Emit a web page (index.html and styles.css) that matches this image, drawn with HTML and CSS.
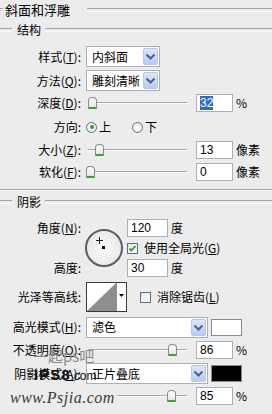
FILE: index.html
```html
<!DOCTYPE html>
<html lang="zh-CN">
<head>
    <meta charset="UTF-8">
    <title>斜面和浮雕</title>
    <link rel="stylesheet" href="styles.css">
</head>
<body>
    <div class="panel">
        <div class="legend legend-top"><span>斜面和浮雕</span></div>
        <div class="legend legend-sub"><span>结构</span></div>

        <!-- 结构 -->
        <div class="row row-combo gap-6">
            <span class="lbl">样式(<u>T</u>):</span>
            <div class="combo combo-sm">
                <span class="combo-text">内斜面</span>
                <span class="combo-btn"><svg width="11" height="7" viewBox="0 0 11 7"><path d="M1.5 1.5 L5.5 5.5 L9.5 1.5" fill="none" stroke="#4d6185" stroke-width="2"/></svg></span>
            </div>
        </div>
        <div class="row row-combo gap-3">
            <span class="lbl">方法(<u>Q</u>):</span>
            <div class="combo combo-sm">
                <span class="combo-text">雕刻清晰</span>
                <span class="combo-btn"><svg width="11" height="7" viewBox="0 0 11 7"><path d="M1.5 1.5 L5.5 5.5 L9.5 1.5" fill="none" stroke="#4d6185" stroke-width="2"/></svg></span>
            </div>
        </div>
        <div class="row gap-2">
            <span class="lbl">深度(<u>D</u>):</span>
            <div class="slider"><span class="track"></span><span class="thumb" style="left: 2px"></span></div>
            <span class="num"><span class="sel">32</span></span>
            <span class="unit">%</span>
        </div>
        <div class="row gap-4">
            <span class="lbl">方向:</span>
            <span class="radio checked"></span><span class="radio-text">上</span>
            <span class="radio radio-second"></span><span class="radio-text">下</span>
        </div>
        <div class="row gap-3">
            <span class="lbl">大小(<u>Z</u>):</span>
            <div class="slider"><span class="track"></span><span class="thumb" style="left: 9px"></span></div>
            <span class="num">13</span>
            <span class="unit">像素</span>
        </div>
        <div class="row gap-2">
            <span class="lbl">软化(<u>F</u>):</span>
            <div class="slider"><span class="track"></span><span class="thumb" style="left: 0px"></span></div>
            <span class="num">0</span>
            <span class="unit">像素</span>
        </div>

        <div class="sep"></div>

        <!-- 阴影 -->
        <div class="legend legend-sub legend-shadow"><span>阴影</span></div>

        <div class="angle">
            <span class="lbl angle-lbl-top">角度(<u>N</u>):</span>
            <div class="dial"><span class="cross"></span><span class="dot"></span></div>
            <div class="cell cell-top">
                <span class="num num-wide">120</span>
                <span class="unit">度</span>
            </div>
            <div class="cell cell-mid">
                <span class="check checked"><svg width="9" height="9" viewBox="0 0 9 9"><path d="M1.5 4.5 L3.5 6.5 L7.5 2" fill="none" stroke="#21a121" stroke-width="1.8"/></svg></span>
                <span class="check-text">使用全局光(<u>G</u>)</span>
            </div>
            <span class="lbl angle-lbl-bottom">高度:</span>
            <div class="cell cell-bottom">
                <span class="num num-wide">30</span>
                <span class="unit">度</span>
            </div>
        </div>

        <div class="row row-contour gap-4">
            <span class="lbl">光泽等高线:</span>
            <svg class="contour" width="41" height="30" viewBox="0 0 41 30">
                <rect x="0.5" y="0.5" width="40" height="29" fill="#fff" stroke="#3a3a3a"/>
                <polygon points="1,29 30,1 30,29" fill="#8e8e8e"/>
                <line x1="30.5" y1="1" x2="30.5" y2="29" stroke="#8e8e8e"/>
                <polygon points="33,12 38,12 35.5,15" fill="#000"/>
            </svg>
            <span class="check check-aa"></span>
            <span class="check-text">消除锯齿(<u>L</u>)</span>
        </div>

        <div class="row row-mode gap-4">
            <span class="lbl">高光模式(<u>H</u>):</span>
            <div class="combo combo-lg">
                <span class="combo-text">滤色</span>
                <span class="combo-btn"><svg width="11" height="7" viewBox="0 0 11 7"><path d="M1.5 1.5 L5.5 5.5 L9.5 1.5" fill="none" stroke="#4d6185" stroke-width="2"/></svg></span>
            </div>
            <span class="swatch swatch-white"></span>
        </div>
        <div class="row gap-2">
            <span class="lbl">不透明度(<u>O</u>):</span>
            <div class="slider"><span class="track"></span><span class="thumb" style="left: 82px"></span></div>
            <span class="num">86</span>
            <span class="unit">%</span>
        </div>
        <div class="row row-combo gap-3">
            <span class="lbl">阴影模式(<u>A</u>):</span>
            <div class="combo combo-lg">
                <span class="combo-text">正片叠底</span>
                <span class="combo-btn"><svg width="11" height="7" viewBox="0 0 11 7"><path d="M1.5 1.5 L5.5 5.5 L9.5 1.5" fill="none" stroke="#4d6185" stroke-width="2"/></svg></span>
            </div>
            <span class="swatch swatch-black"></span>
        </div>
        <div class="row gap-2">
            <span class="lbl">不透明度(<u>C</u>):</span>
            <div class="slider"><span class="track"></span><span class="thumb" style="left: 81px"></span></div>
            <span class="num">85</span>
            <span class="unit">%</span>
        </div>
    </div>

    <!-- 水印 -->
    <div class="wm wm-cn">一起ps吧</div>
    <div class="wm wm-site"><b>IPS8</b>.com</div>
    <div class="wm wm-url">www.Psjia.com</div>
</body>
</html>
```

FILE: styles.css
```css
* {
    margin: 0;
    padding: 0;
    box-sizing: border-box;
}

body {
    width: 272px;
    height: 414px;
    overflow: hidden;
    position: relative;
    background: #ececec;
    color: #000;
    font-family: "Noto Sans CJK SC", "Liberation Sans", sans-serif;
    font-size: 12px;
    line-height: 14px;
}

u {
    text-decoration: underline;
}

/* group titles */
.legend {
    display: flex;
    align-items: center;
    height: 20px;
}

.legend::before,
.legend::after {
    content: "";
    height: 2px;
    border-top: 1px solid #a3a3a3;
    border-bottom: 1px solid #fafafa;
}

.legend::after {
    flex: 1;
}

.legend-top {
    font-size: 13px;
}

.legend-top::before {
    width: 3px;
}

.legend-top span {
    margin: 0 17px 0 2px;
}

.legend-sub::before {
    width: 12px;
}

.legend-sub span {
    margin: 0 4px 0 5px;
}

.legend-shadow {
    margin-top: 1px;
}

.sep {
    height: 2px;
    margin-top: 7px;
    border-top: 1px solid #a3a3a3;
    border-bottom: 1px solid #fafafa;
}

/* rows */
.row {
    display: flex;
    align-items: center;
    height: 20px;
}

.row-combo {
    height: 21px;
}

.row-mode {
    height: 22px;
}

.row-contour {
    height: 30px;
}

.gap-2 { margin-top: 2px; }
.gap-3 { margin-top: 3px; }
.gap-4 { margin-top: 4px; }
.gap-6 { margin-top: 6px; }

.lbl {
    flex-shrink: 0;
    width: 81px;
    margin-right: 5px;
    text-align: right;
    white-space: nowrap;
}

/* combo boxes */
.combo {
    display: flex;
    align-items: center;
    height: 21px;
    padding: 1px;
    background: #fff;
    border: 1px solid #a9b0b8;
}

.combo-sm {
    width: 74px;
}

.combo-lg {
    width: 122px;
}

.combo-text {
    flex: 1;
    padding-left: 4px;
    white-space: nowrap;
}

.combo-btn {
    display: flex;
    align-items: center;
    justify-content: center;
    flex-shrink: 0;
    width: 15px;
    height: 17px;
    background: linear-gradient(#dce7fd, #b7cbf6);
    border: 1px solid #b5c8f2;
    border-radius: 2px;
}

/* sliders */
.slider {
    position: relative;
    flex-shrink: 0;
    width: 101px;
    height: 20px;
}

.track {
    position: absolute;
    left: 2px;
    right: 0;
    top: 9px;
    height: 2px;
    border-top: 1px solid #a8a8a8;
    border-bottom: 1px solid #fbfbfb;
}

.thumb {
    position: absolute;
    top: 4px;
    width: 9px;
    height: 12px;
    background: linear-gradient(#ffffff, #e6e6e6);
    border: 1px solid #8c8c8c;
    border-bottom: 2px solid #3f9f45;
    border-radius: 4px 4px 1px 1px;
}

/* text fields */
.num {
    flex-shrink: 0;
    width: 37px;
    height: 18px;
    margin-left: 9px;
    padding-left: 3px;
    background: #fff;
    border: 1px solid #a9b0b8;
    font-family: "Liberation Sans", sans-serif;
    font-size: 12px;
    line-height: 16px;
}

.num-wide {
    width: 41px;
    margin-left: 0;
}

.sel {
    background: #316ac5;
    color: #fff;
}

.unit {
    margin-left: 3px;
    white-space: nowrap;
}

/* radios and checkboxes */
.radio {
    position: relative;
    width: 11px;
    height: 11px;
    border: 1px solid #5c6e85;
    border-radius: 50%;
    background: radial-gradient(#ffffff, #e4e4e4);
}

.radio.checked::after {
    content: "";
    position: absolute;
    left: 2.5px;
    top: 2.5px;
    width: 4px;
    height: 4px;
    border-radius: 50%;
    background: #2ba12b;
}

.radio-text {
    margin-left: 2px;
}

.radio-second {
    margin-left: 21px;
}

.check {
    display: flex;
    align-items: center;
    justify-content: center;
    width: 11px;
    height: 11px;
    background: linear-gradient(135deg, #e6e6e6, #ffffff);
    border: 1px solid #5c6e85;
}

.check-text {
    margin-left: 6px;
    white-space: nowrap;
}

.check-aa {
    margin-left: 13px;
}

/* angle block */
.angle {
    display: grid;
    grid-template-columns: 86px 41px auto;
    grid-template-rows: repeat(3, 20px);
    margin-top: 6px;
}

.angle .lbl {
    width: 81px;
    align-self: center;
}

.angle-lbl-top {
    grid-column: 1;
    grid-row: 1;
}

.angle-lbl-bottom {
    grid-column: 1;
    grid-row: 3;
}

.cell {
    display: flex;
    align-items: center;
    grid-column: 3;
}

.cell-top { grid-row: 1; }
.cell-mid { grid-row: 2; }
.cell-bottom { grid-row: 3; }

.dial {
    grid-column: 2;
    grid-row: 1 / 4;
    align-self: center;
    position: relative;
    width: 38px;
    height: 38px;
    margin-left: -1px;
    border: 2px solid #5a5d6a;
    border-radius: 50%;
    background: radial-gradient(#fbfbfb, #e2e2e2);
}

.cross {
    position: absolute;
    left: 9px;
    top: 6px;
    width: 7px;
    height: 7px;
}

.cross::before,
.cross::after {
    content: "";
    position: absolute;
    background: #222;
}

.cross::before {
    left: 3px;
    top: 0;
    width: 1px;
    height: 7px;
}

.cross::after {
    left: 0;
    top: 3px;
    width: 7px;
    height: 1px;
}

.dot {
    position: absolute;
    left: 15px;
    top: 15px;
    width: 3px;
    height: 3px;
    background: #000;
}

.contour {
    display: block;
    flex-shrink: 0;
}

.swatch {
    flex-shrink: 0;
    width: 31px;
    height: 17px;
    margin-left: 3px;
    border: 1px solid #8a8a8a;
}

.swatch-white {
    background: #fff;
}

.swatch-black {
    background: #000;
}

/* watermarks */
.wm {
    position: absolute;
    white-space: nowrap;
}

.wm-cn {
    left: 33px;
    top: 346px;
    font-size: 15px;
    line-height: 20px;
    color: #8a8a8a;
}

.wm-site {
    left: 34px;
    top: 367px;
    font-family: "Liberation Sans", sans-serif;
    font-size: 12px;
    line-height: 16px;
    color: #111;
}

.wm-site b {
    font-size: 15px;
    font-weight: 900;
    letter-spacing: 1px;
}

.wm-url {
    left: 10px;
    top: 389px;
    padding-right: 2px;
    background: #ececec;
    font-family: "Liberation Serif", serif;
    font-style: italic;
    font-size: 16px;
    line-height: 17px;
    letter-spacing: 0.5px;
    color: #3a3a3a;
}
```
